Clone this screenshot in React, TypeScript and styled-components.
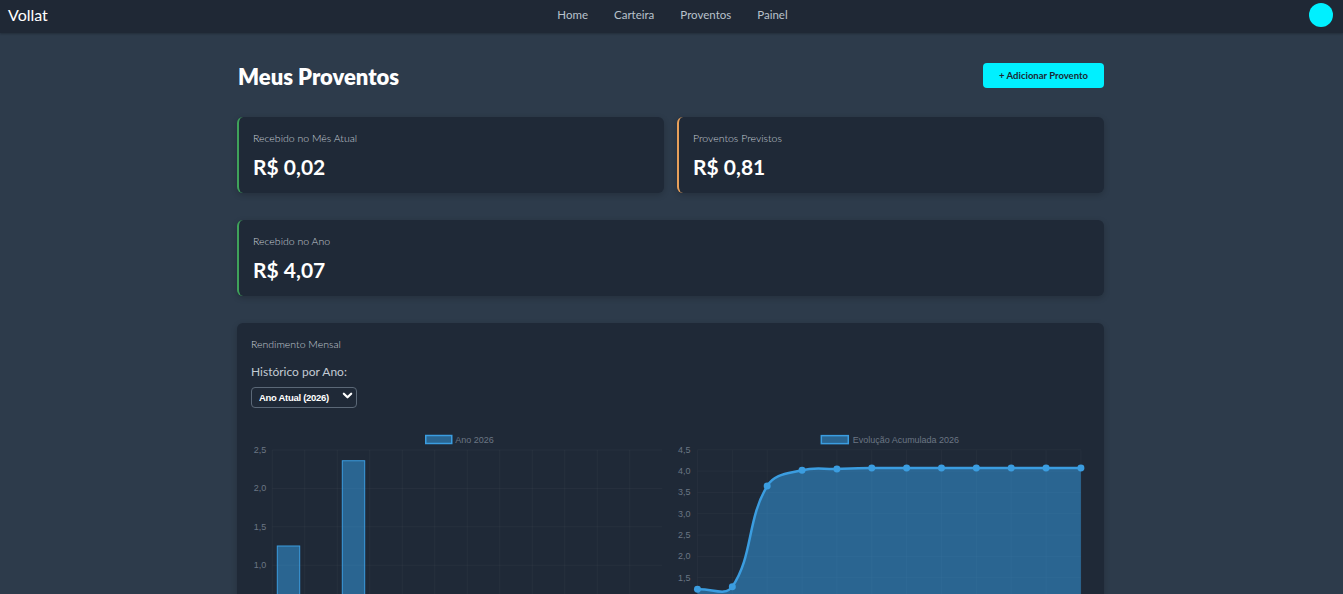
import { FC } from 'react';
import styled, { createGlobalStyle } from 'styled-components';

const GlobalStyle = createGlobalStyle`
	body {
		margin: 0;
		background: #2d3b4b;
		font-family: 'Lato', 'Open Sans', sans-serif;
		color: #ffffff;
	}
`;

const BLUE = '#3b9de0';
const BLUE_FILL = 'rgba(54, 162, 235, 0.5)';
const GRID = 'rgba(255, 255, 255, 0.035)';
const TICK = '#6b7684';

const monthly = [1.25, 0, 2.36, 0.41, 0.02, 0.02, 0, 0, 0, 0, 0, 0];
const cumulative = [1.23, 1.29, 3.65, 4.02, 4.05, 4.07, 4.07, 4.07, 4.07, 4.07, 4.07, 4.07];

type Pt = { x: number; y: number };

// same control points as chart.js splineCurve, tension 0.4
const splinePath = (pts: Pt[], t = 0.4) => {
	const ctrl = pts.map((cur, i) => {
		const prev = pts[i - 1] || cur;
		const next = pts[i + 1] || cur;
		const d01 = Math.hypot(cur.x - prev.x, cur.y - prev.y);
		const d12 = Math.hypot(next.x - cur.x, next.y - cur.y);
		let s01 = d01 / (d01 + d12);
		let s12 = d12 / (d01 + d12);
		s01 = isNaN(s01) ? 0 : s01;
		s12 = isNaN(s12) ? 0 : s12;
		const fa = t * s01;
		const fb = t * s12;
		return {
			prev: { x: cur.x - fa * (next.x - prev.x), y: cur.y - fa * (next.y - prev.y) },
			next: { x: cur.x + fb * (next.x - prev.x), y: cur.y + fb * (next.y - prev.y) },
		};
	});
	let d = `M${pts[0].x},${pts[0].y}`;
	for (let i = 1; i < pts.length; i++) {
		const a = ctrl[i - 1].next;
		const b = ctrl[i].prev;
		d += ` C${a.x},${a.y} ${b.x},${b.y} ${pts[i].x},${pts[i].y}`;
	}
	return d;
};

const PLOT_TOP = 20;
const PLOT_BOTTOM = 212;

const BarChart: FC = () => {
	const left = 21;
	const cat = 32.5;
	const max = 2.5;
	const yOf = (v: number) => PLOT_BOTTOM - (v / max) * (PLOT_BOTTOM - PLOT_TOP);
	const ticks = [0, 0.5, 1, 1.5, 2, 2.5];
	return (
		<ChartSvg viewBox="0 0 417 240" width="100%" height="240">
			{Array.from({ length: 12 }).map((_, i) => (
				<line key={i} x1={left + i * cat} x2={left + i * cat} y1={PLOT_TOP} y2={PLOT_BOTTOM} stroke={GRID} />
			))}
			{ticks.map((v) => (
				<g key={v}>
					<line x1={left} x2={left + 12 * cat} y1={yOf(v)} y2={yOf(v)} stroke={GRID} />
					<text x={15} y={yOf(v) + 3} textAnchor="end" fill={TICK} fontSize="9">
						{v.toFixed(1).replace('.', ',')}
					</text>
				</g>
			))}
			{monthly.map((v, i) =>
				v > 0 ? (
					<rect
						key={i}
						x={left + i * cat + cat * 0.14 + 0.5}
						y={yOf(v)}
						width={cat * 0.72 - 1}
						height={PLOT_BOTTOM - yOf(v)}
						fill={BLUE_FILL}
						stroke={BLUE}
						strokeWidth="1"
					/>
				) : null,
			)}
			<rect x={174.5} y={5.5} width={26} height={8} fill={BLUE_FILL} stroke={BLUE} strokeWidth="1.5" />
			<text x={204} y={12.5} fill={TICK} fontSize="9">
				Ano 2026
			</text>
		</ChartSvg>
	);
};

const LineChart: FC = () => {
	const x0 = 24.5;
	const step = 34.9;
	const yOf = (v: number) => 41 - (v - 4) * 42.7;
	const ticks = [0, 0.5, 1, 1.5, 2, 2.5, 3, 3.5, 4, 4.5];
	const pts = cumulative.map((v, i) => ({ x: x0 + i * step, y: yOf(v) }));
	const line = splinePath(pts);
	const area = `${line} L${pts[pts.length - 1].x},${yOf(0)} L${pts[0].x},${yOf(0)} Z`;
	return (
		<ChartSvg viewBox="0 0 418 240" width="100%" height="240">
			{pts.map((p, i) => (
				<line key={i} x1={p.x} x2={p.x} y1={PLOT_TOP} y2={yOf(0)} stroke={GRID} />
			))}
			{ticks.map((v) => (
				<g key={v}>
					<line x1={x0} x2={pts[11].x} y1={yOf(v)} y2={yOf(v)} stroke={GRID} />
					<text x={17.5} y={yOf(v) + 3} textAnchor="end" fill={TICK} fontSize="9">
						{v.toFixed(1).replace('.', ',')}
					</text>
				</g>
			))}
			<path d={area} fill={BLUE_FILL} />
			<path d={line} fill="none" stroke={BLUE} strokeWidth="2.5" />
			{pts.map((p, i) => (
				<circle key={i} cx={p.x} cy={p.y} r={3.5} fill={BLUE} />
			))}
			<rect x={148.5} y={5.5} width={27} height={8} fill={BLUE_FILL} stroke={BLUE} strokeWidth="1.5" />
			<text x={180} y={12.5} fill={TICK} fontSize="9">
				Evolução Acumulada 2026
			</text>
		</ChartSvg>
	);
};

const App: FC = () => {
	return (
		<>
			<GlobalStyle />
			<NavBar>
				<Brand>Vollat</Brand>
				<NavLinks>
					<NavLink>Home</NavLink>
					<NavLink>Carteira</NavLink>
					<NavLink>Proventos</NavLink>
					<NavLink>Painel</NavLink>
				</NavLinks>
				<Avatar />
			</NavBar>
			<Main>
				<Header>
					<Title>Meus Proventos</Title>
					<AddButton>+ Adicionar Provento</AddButton>
				</Header>
				<CardRow>
					<StatCard $accent="#3fa25a">
						<StatLabel>Recebido no Mês Atual</StatLabel>
						<StatValue>R$ 0,02</StatValue>
					</StatCard>
					<StatCard $accent="#e8a05a">
						<StatLabel>Proventos Previstos</StatLabel>
						<StatValue>R$ 0,81</StatValue>
					</StatCard>
				</CardRow>
				<CardRow>
					<StatCard $accent="#3fa25a">
						<StatLabel>Recebido no Ano</StatLabel>
						<StatValue>R$ 4,07</StatValue>
					</StatCard>
				</CardRow>
				<ChartCard>
					<StatLabel>Rendimento Mensal</StatLabel>
					<YearLabel>Histórico por Ano:</YearLabel>
					<SelectWrap>
						<YearSelect defaultValue="2026">
							<option value="2026">Ano Atual (2026)</option>
						</YearSelect>
						<Chevron viewBox="0 0 12 12" width="11" height="11">
							<path d="M2 4l4 4 4-4" fill="none" stroke="#ffffff" strokeWidth="2.4" strokeLinecap="round" strokeLinejoin="round" />
						</Chevron>
					</SelectWrap>
					<Charts>
						<BarChart />
						<LineChart />
					</Charts>
				</ChartCard>
			</Main>
		</>
	);
};

const NavBar = styled.nav`
	height: 33px;
	box-sizing: border-box;
	background: #1f2835;
	box-shadow: 0 1px 2px rgba(0, 0, 0, 0.25);
	display: flex;
	align-items: center;
	justify-content: space-between;
	padding: 0 10px 4px 8px;
	position: relative;
`;

const Brand = styled.div`
	font-size: 16px;
	color: #ffffff;
	width: 120px;
`;

const NavLinks = styled.div`
	display: flex;
	gap: 26px;
	margin-left: 4px;
`;

const NavLink = styled.a`
	font-size: 11.5px;
	color: #b9c2cc;
	cursor: pointer;
`;

const Avatar = styled.div`
	width: 24px;
	height: 24px;
	border-radius: 50%;
	background: #00f0ff;
	margin-left: 96px;
`;

const Main = styled.main`
	width: 869px;
	box-sizing: border-box;
	padding: 30px 2px 0 0;
	margin: 0 auto;
	display: flex;
	flex-direction: column;
`;

const Header = styled.div`
	display: flex;
	align-items: center;
	justify-content: space-between;
	height: 25px;
	margin-bottom: 29px;
`;

const Title = styled.h1`
	margin: 2px 0 0 1px;
	font-size: 22px;
	font-weight: 800;
	color: #ffffff;
`;

const AddButton = styled.button`
	width: 121px;
	height: 25px;
	border: none;
	border-radius: 4px;
	background: #00f0ff;
	color: #1c2733;
	font-family: inherit;
	font-size: 9.5px;
	font-weight: 700;
	cursor: pointer;
`;

const CardRow = styled.div`
	display: flex;
	gap: 13px;
	margin-bottom: 27px;
`;

const StatCard = styled.div<{ $accent: string }>`
	flex: 1;
	height: 76px;
	box-sizing: border-box;
	background: #1f2937;
	border-left: 2px solid ${({ $accent }) => $accent};
	border-radius: 6px;
	box-shadow: 0 2px 6px rgba(0, 0, 0, 0.2);
	padding: 14px 14px;
	display: flex;
	flex-direction: column;
	gap: 7px;
`;

const StatLabel = styled.div`
	font-size: 10.5px;
	font-weight: 300;
	color: #c5ccd5;
	line-height: 15px;
`;

const StatValue = styled.div`
	font-size: 21px;
	font-weight: 700;
	color: #ffffff;
	line-height: 28px;
`;

const ChartCard = styled.div`
	background: #1f2937;
	border-radius: 6px;
	box-shadow: 0 2px 6px rgba(0, 0, 0, 0.2);
	padding: 14px;
	height: 400px;
`;

const YearLabel = styled.div`
	font-size: 12px;
	color: #c3cbd4;
	margin-top: 12px;
	margin-bottom: 6px;
`;

const SelectWrap = styled.div`
	position: relative;
	width: 106px;
	height: 21px;
`;

const YearSelect = styled.select`
	appearance: none;
	width: 106px;
	height: 21px;
	box-sizing: border-box;
	background: #1f2937;
	border: 1px solid #5b6877;
	border-radius: 4px;
	color: #ffffff;
	font-family: 'Liberation Sans', Arial, sans-serif;
	font-size: 9.5px;
	font-weight: 700;
	padding: 0 0 0 7px;
	letter-spacing: -0.3px;
`;

const Chevron = styled.svg`
	position: absolute;
	right: 4px;
	top: 5px;
	pointer-events: none;
`;

const Charts = styled.div`
	display: grid;
	grid-template-columns: 1fr 1fr;
	gap: 4px;
	margin-top: 24px;
`;

const ChartSvg = styled.svg`
	display: block;
	font-family: 'Liberation Sans', Arial, sans-serif;
`;

export default App;
